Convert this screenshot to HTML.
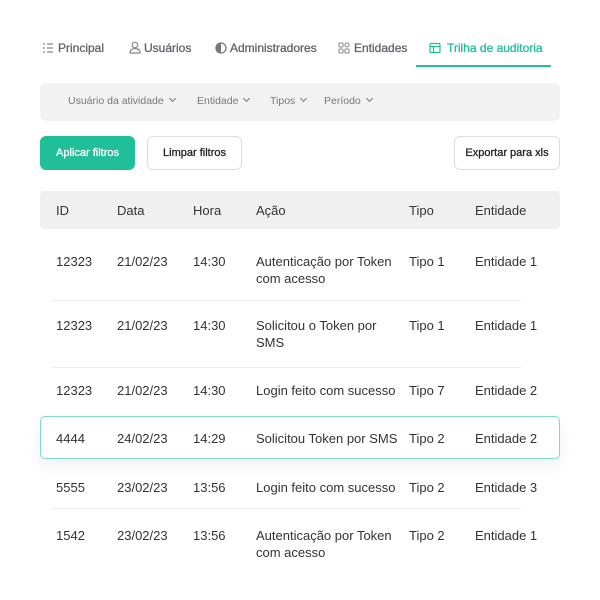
<!DOCTYPE html>
<html><head><meta charset="utf-8"><style>
*{margin:0;padding:0;box-sizing:border-box}
body{width:600px;height:600px;background:#fff;font-family:"Liberation Sans",sans-serif;position:relative;overflow:hidden}
.a{position:absolute;white-space:nowrap}
.tab{font-size:12px;color:#5f636a;top:41px;-webkit-text-stroke:0.3px currentColor}
.flt{font-size:10.5px;color:#777;top:95px}
.btn{position:absolute;top:136px;height:34px;border-radius:6px;font-size:11px;display:flex;align-items:center;justify-content:center;color:#222;border:1px solid #ddd;background:#fff;-webkit-text-stroke:0.3px currentColor}
.c{position:absolute;font-size:13px;color:#333;line-height:17px}
.sep{position:absolute;left:52px;width:469px;height:1px;background:#ececec}
.chev{display:inline-block;width:5px;height:5px;border-right:1.2px solid #777;border-bottom:1.2px solid #777;transform:rotate(45deg);margin-left:6px;position:relative;top:-3px}
</style></head><body>
<svg class="a" style="left:42px;top:42px" width="12" height="12" viewBox="0 0 12 12" fill="none" stroke="#888" stroke-width="1.2"><path d="M1 2h2M1 6h2M1 10h2M5 2h6M5 6h6M5 10h6"/></svg>
<div class="a tab" style="left:58px">Principal</div>
<svg class="a" style="left:129px;top:41px" width="12" height="13" viewBox="0 0 12 13" fill="none" stroke="#888" stroke-width="1.2"><circle cx="6" cy="4" r="2.8"/><path d="M1 12c0-3 2-4.5 5-4.5s5 1.5 5 4.5z"/></svg>
<div class="a tab" style="left:144px">Usuários</div>
<svg class="a" style="left:215px;top:42px" width="12" height="12" viewBox="0 0 12 12"><circle cx="6" cy="6" r="5" fill="none" stroke="#777" stroke-width="1.3"/><path d="M6 1a5 5 0 0 0 0 10z" fill="#777"/></svg>
<div class="a tab" style="left:230px">Administradores</div>
<svg class="a" style="left:338px;top:42px" width="12" height="12" viewBox="0 0 12 12" fill="none" stroke="#888" stroke-width="1.1"><rect x="1" y="1" width="4" height="4" rx="1"/><circle cx="9" cy="3" r="2"/><rect x="1" y="7" width="4" height="4" rx="1"/><rect x="7" y="7" width="4" height="4" rx="1"/></svg>
<div class="a tab" style="left:354px">Entidades</div>
<svg class="a" style="left:429px;top:42px" width="12" height="12" viewBox="0 0 12 12" fill="none" stroke="#22bf98" stroke-width="1.2"><rect x="1" y="1.5" width="10" height="9" rx="1"/><path d="M1 4.5h10M4.5 4.5v6"/></svg>
<div class="a tab" style="left:447px;color:#22bf98">Trilha de auditoria</div>
<div class="a" style="left:416px;top:65px;width:135px;height:2px;background:#22bf98"></div>

<div class="a" style="left:40px;top:83px;width:520px;height:38px;background:#f2f2f2;border-radius:6px"></div>
<div class="a flt" style="left:68px">Usuário da atividade<span class="chev"></span></div>
<div class="a flt" style="left:197px">Entidade<span class="chev"></span></div>
<div class="a flt" style="left:270px">Tipos<span class="chev"></span></div>
<div class="a flt" style="left:324px">Período<span class="chev"></span></div>

<div class="btn" style="left:40px;width:95px;background:#20bf9a;border-color:#20bf9a;color:#fff">Aplicar filtros</div>
<div class="btn" style="left:147px;width:95px">Limpar filtros</div>
<div class="btn" style="left:454px;width:106px">Exportar para xls</div>

<div class="a" style="left:40px;top:191px;width:520px;height:38px;background:#f0f0f0;border-radius:4px"></div>
<div class="c" style="left:56px;top:202px">ID</div>
<div class="c" style="left:117px;top:202px">Data</div>
<div class="c" style="left:193px;top:202px">Hora</div>
<div class="c" style="left:256px;top:202px">Ação</div>
<div class="c" style="left:409px;top:202px">Tipo</div>
<div class="c" style="left:475px;top:202px">Entidade</div>

<div class="c" style="left:56px;top:253px">12323</div><div class="c" style="left:117px;top:253px">21/02/23</div><div class="c" style="left:193px;top:253px">14:30</div><div class="c" style="left:256px;top:253px">Autenticação por Token<br>com acesso</div><div class="c" style="left:409px;top:253px">Tipo 1</div><div class="c" style="left:475px;top:253px">Entidade 1</div>
<div class="sep" style="top:300px"></div>
<div class="c" style="left:56px;top:317px">12323</div><div class="c" style="left:117px;top:317px">21/02/23</div><div class="c" style="left:193px;top:317px">14:30</div><div class="c" style="left:256px;top:317px">Solicitou o Token por<br>SMS</div><div class="c" style="left:409px;top:317px">Tipo 1</div><div class="c" style="left:475px;top:317px">Entidade 1</div>
<div class="sep" style="top:367px"></div>
<div class="c" style="left:56px;top:382px">12323</div><div class="c" style="left:117px;top:382px">21/02/23</div><div class="c" style="left:193px;top:382px">14:30</div><div class="c" style="left:256px;top:382px">Login feito com sucesso</div><div class="c" style="left:409px;top:382px">Tipo 7</div><div class="c" style="left:475px;top:382px">Entidade 2</div>

<div class="a" style="left:40px;top:416px;width:520px;height:43px;border:1.2px solid #7fdcc4;border-radius:5px;box-shadow:0 6px 14px rgba(40,60,120,0.08);background:#fff"></div>
<div class="c" style="left:56px;top:430px">4444</div><div class="c" style="left:117px;top:430px">24/02/23</div><div class="c" style="left:193px;top:430px">14:29</div><div class="c" style="left:256px;top:430px">Solicitou Token por SMS</div><div class="c" style="left:409px;top:430px">Tipo 2</div><div class="c" style="left:475px;top:430px">Entidade 2</div>

<div class="c" style="left:56px;top:479px">5555</div><div class="c" style="left:117px;top:479px">23/02/23</div><div class="c" style="left:193px;top:479px">13:56</div><div class="c" style="left:256px;top:479px">Login feito com sucesso</div><div class="c" style="left:409px;top:479px">Tipo 2</div><div class="c" style="left:475px;top:479px">Entidade 3</div>
<div class="sep" style="top:508px"></div>
<div class="c" style="left:56px;top:527px">1542</div><div class="c" style="left:117px;top:527px">23/02/23</div><div class="c" style="left:193px;top:527px">13:56</div><div class="c" style="left:256px;top:527px">Autenticação por Token<br>com acesso</div><div class="c" style="left:409px;top:527px">Tipo 2</div><div class="c" style="left:475px;top:527px">Entidade 1</div>
</body></html>
